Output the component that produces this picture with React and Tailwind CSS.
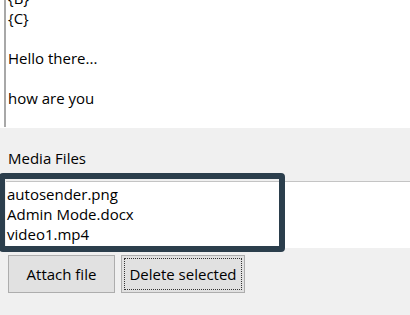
import React from 'react';

export default function App() {
  const files = ['autosender.png', 'Admin Mode.docx', 'video1.mp4'];

  return (
    <div className="relative w-[410px] h-[315px] overflow-hidden bg-[#f0f0f0] text-[15px] text-black font-['Open_Sans',sans-serif]">
      {/* message body textbox (scrolled) */}
      <div className="h-[128px] bg-white pl-[4px] overflow-hidden">
        <div className="h-[127px] border-l-2 border-[#a8a8a8] pl-[2px] overflow-hidden">
          <div className="-mt-[12px] leading-[20px]">
            <div>{'{B}'}</div>
            <div>{'{C}'}</div>
            <div>&nbsp;</div>
            <div>Hello there...</div>
            <div>&nbsp;</div>
            <div>how are you</div>
          </div>
        </div>
      </div>

      {/* media files */}
      <div className="h-[53px] pl-[8px] pt-[20px] leading-[20px]">Media Files</div>

      <div className="ml-[6px] h-[67px] bg-white border-t border-[#c4c4c4] pl-[1px] pt-[2px] leading-[20px]">
        {files.map((f) => (
          <div key={f}>{f}</div>
        ))}
      </div>

      <div className="flex gap-[6px] pl-[8px] pt-[7px]">
        <button className="w-[107px] h-[38px] bg-[#e1e1e1] border border-[#adadad] leading-none">
          Attach file
        </button>
        <button className="w-[124px] h-[38px] bg-[#e1e1e1] border border-[#adadad] p-[2px] leading-none">
          <span className="flex h-full w-full items-center justify-center border border-dotted border-[#333]">
            Delete selected
          </span>
        </button>
      </div>

      {/* highlight annotation */}
      <div className="absolute left-[-1px] top-[173px] w-[286px] h-[79px] border-[6px] border-[#2b3e4c] rounded-[4px]" />
    </div>
  );
}
